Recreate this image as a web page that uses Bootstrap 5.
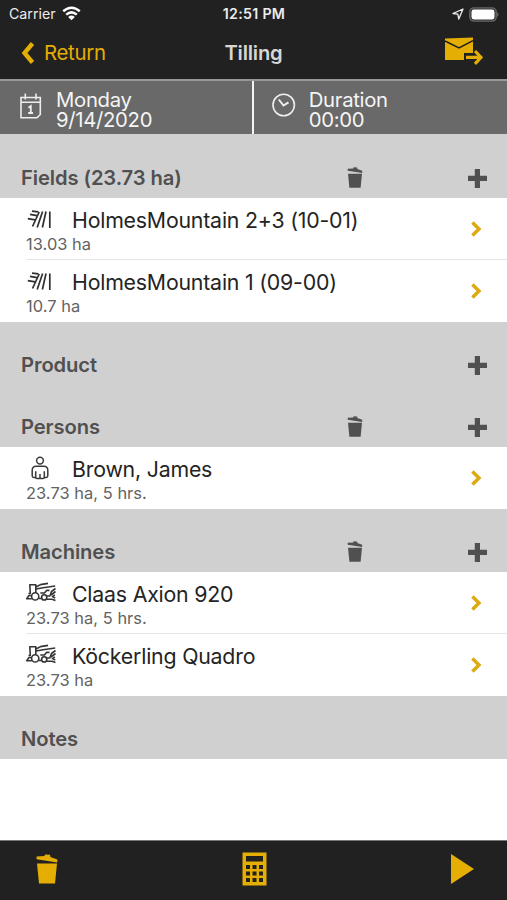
<!DOCTYPE html>
<html lang="en">
<head>
<meta charset="utf-8">
<meta name="viewport" content="width=device-width, initial-scale=1">
<title>Tilling</title>
<link href="https://cdn.jsdelivr.net/npm/bootstrap@5.3.0/dist/css/bootstrap.min.css" rel="stylesheet">
<style>
body{font-family:Inter,"Liberation Sans",sans-serif;background:#fff;color:#242424;overflow:hidden}
svg{display:block;flex:none}
.screen{height:900px}
.dark-bar{background:#212121}
.gold{color:#e5ae04}
.status{height:27px;font-size:14.2px;color:#ececec;padding:1px 8px 0 9px}
.status > div,.title-bar > div{flex:1 1 0}
.status .clock{letter-spacing:.3px}
.wifi{margin-left:6px}
.battery{margin-left:5px}
.title-bar{height:52px;padding:1px 24px 0 21px}
.back{font-size:20.4px;letter-spacing:-.3px}
.back span{margin-left:9px}
.page-name{font-size:20.2px;font-weight:600;color:#d6d6d6;letter-spacing:-.2px;padding-left:3px}
.mail{margin-top:-5px}
.info{height:55px;background:#696969;border-top:2px solid #999;color:#f5f5f5;font-size:20.3px;line-height:20px;letter-spacing:-.3px}
.info > div{padding:9px 0 0 20px;width:50%}
.info > div:first-child{border-right:2px solid #f4f4f4;width:254px}
.info .caption{padding-left:14px}
.section-head{height:62.4px;background:#d0d0d0;padding:23px 20px 0 21px;color:#505050;font-size:20.2px;font-weight:600;letter-spacing:-.1px}
.section-head.first{height:64px;padding-top:25px}
.section-head .heading{padding-top:6.4px}
.section-head .tools{width:140px}
.section-head .add{margin-top:10.4px}
.section-head .clear{margin-top:8.4px}
.entry{height:62.2px;padding:9.8px 25px 0 0;margin-left:26px}
.entry + .entry{border-top:1px solid #e6e6e6;padding-top:9.5px;margin-top:-.8px;height:63px}
.entry .name{font-size:21.3px;line-height:25px;letter-spacing:-.2px}
.entry .kind{width:46px}
.entry .detail{font-size:16.4px;line-height:22px;color:#626262;letter-spacing:.05px}
.entry .go{margin-top:13.5px}
.bottom-bar{height:60px;border-top:1px solid #777;padding:0 33px 3px 36px}
</style>
</head>
<body>
<svg width="0" height="0" class="position-absolute" aria-hidden="true">
<defs>
<symbol id="bin" viewBox="0 0 22 30"><path fill="currentColor" d="M1 9.6H21L19 29.5H3ZM.6 2.5 8.5 2 9 .5 14 .8 14.4 3 21.3 5.4V8.5L.6 5.2Z"/></symbol>
<symbol id="plus" viewBox="0 0 19 19"><path fill="currentColor" d="M6.8 0H12V6.8H19V12H12V19H6.8V12H0V6.8H6.8Z"/></symbol>
<symbol id="next" viewBox="0 0 11 16"><path fill="none" stroke="#deaa12" stroke-width="3.5" d="M1.4 1.4 8 8 1.4 14.6"/></symbol>
<symbol id="field" viewBox="0 0 26 20"><path fill="none" stroke="#303030" stroke-width="1.7" d="M5.5 16.5 12.2 2M10.2 17.5 15.6 1.5M15.4 17.5 19 1.5M22.8 1.5V18M5 1.2 11.5 1.8M3 4.4 10 5.6M.8 8.6 8.2 9.8"/></symbol>
<symbol id="person" viewBox="0 0 18 24"><g fill="none" stroke="#3a3a3a" stroke-width="1.5"><circle cx="9" cy="4.6" r="3.4"/><path d="M4.5 21.5H2.8Q1.2 21.5 1.2 19.8V14.2Q1.2 10.2 5.2 10.2H12.8Q16.8 10.2 16.8 14.2V19.8Q16.8 21.5 15.2 21.5H13.5M4.7 15.2V21.2Q4.7 22.4 6 22.4H12Q13.3 22.4 13.3 21.2V15.2M9 18V22.4"/></g></symbol>
<symbol id="machine" viewBox="0 0 31 20"><g fill="none" stroke="#353535" stroke-width="1.6" stroke-linejoin="round"><circle cx="9.2" cy="14.4" r="3.6"/><circle cx="18.2" cy="15.4" r="2.6"/><path d="M4.3 12 3.8 2.8H9.8V10.8M4 11.5H2.5M5.4 13.5H3L.7 16.8H5.8M12.8 16.5H15.4M10 5 14.5 2.6 22 1.4M10 7 17 5.8 29.2 4M14.3 11H18.5L20.5 8.4H23.5M20.6 14H23.8L25.5 9.5 29.5 6.5M20.8 17.2H26L29.5 18.5M25 13 29.5 9.5M28.8 12.8 26.5 14.6 29.2 16"/></g></symbol>
</defs>
</svg>
<main class="screen d-flex flex-column">
<header class="dark-bar">
<div class="status d-flex align-items-center">
<div class="d-flex align-items-center"><span>Carrier</span>
<svg class="wifi" width="19" height="15" viewBox="0 0 19 15"><g fill="none" stroke="#fff" stroke-width="2.5"><path d="M1.2 5.2Q9.5-1.8 17.8 5.2M4.2 8.6Q9.5 4.1 14.8 8.6"/></g><path fill="#fff" d="M6.2 10.9Q9.5 8.3 12.8 10.9L9.5 14.3Z"/></svg></div>
<div class="text-center fw-semibold clock text-nowrap">12:51 PM</div>
<div class="d-flex align-items-center justify-content-end">
<svg width="12" height="12" viewBox="0 0 12 12"><path fill="none" stroke="#eee" stroke-width="1.3" stroke-linejoin="round" d="M11 1 1 5.5 5.8 6.2 6.8 11Z"/></svg>
<svg class="battery" width="30" height="15" viewBox="0 0 30 15"><rect x=".8" y=".9" width="26.4" height="13.2" rx="4" fill="#333" stroke="#666" stroke-width="1.4"/><rect x="2.5" y="2.6" width="23" height="9.8" rx="2.3" fill="#fff"/><path d="M28.3 5Q30.5 7.5 28.3 10Z" fill="#777"/></svg></div>
</div>
<div class="title-bar d-flex align-items-center">
<div class="gold d-flex align-items-center back">
<svg width="14" height="22" viewBox="0 0 14 22"><path fill="none" stroke="currentColor" stroke-width="4.4" d="M11.5 1.5 3.5 11 11.5 20.5"/></svg><span>Return</span></div>
<div class="text-center page-name">Tilling</div>
<div class="d-flex justify-content-end">
<svg class="mail" width="39" height="28" viewBox="0 0 39 28"><path fill="#e5ae04" d="M1 1.5 29 .5V16H20V23H1Z"/><path fill="none" stroke="#212121" stroke-width="1.5" d="M1 4 15 11 29 3.6"/><path fill="none" stroke="#212121" stroke-width="7" d="M22 20.4H33"/><path fill="none" stroke="#e5ae04" stroke-width="3.2" d="M22 20.4H36M31 14 37 20.4 31 26.8"/></svg></div>
</div>
</header>
<section class="info d-flex">
<div class="d-flex"><svg style="margin-top:3px" width="22" height="28" viewBox="0 0 22 28"><g fill="none" stroke="#eee" stroke-width="1.6"><path d="M1 4.5H20.3V21.5L17 24.7H1ZM1 9.2H20.3M5.3 .5V6.5M16 .5V6.5"/></g><path fill="none" stroke="#eee" stroke-width="1.8" d="M8.5 14.7 10.8 13V20M8.2 20H13"/></svg><div class="caption">Monday<br>9/14/2020</div></div>
<div class="d-flex ps-0"><svg style="margin:3px 1px 0 18px" width="24" height="24" viewBox="0 0 24 24"><g fill="none" stroke="#eee" stroke-width="1.6"><circle cx="11.7" cy="12" r="10.7"/><path stroke-width="2" d="M6.8 6.5 11.5 12.5 16.5 9.3"/></g></svg><div class="caption" style="padding-left:12px">Duration<br>00:00</div></div>
</section>
<section>
<div class="section-head first d-flex justify-content-between align-items-start lh-sm"><span class="heading">Fields (23.73 ha)</span><span class="tools d-flex justify-content-between"><svg class="clear" width="16" height="21"><use href="#bin"/></svg><svg class="add" width="19" height="19"><use href="#plus"/></svg></span></div>
<div class="entry d-flex justify-content-between"><div><div class="name d-flex"><span class="kind"><svg style="margin:2px 0 0 1px" width="26" height="20"><use href="#field"/></svg></span><span>HolmesMountain 2+3 (10-01)</span></div><div class="detail">13.03 ha</div></div><svg class="go" width="11" height="16"><use href="#next"/></svg></div>
<div class="entry d-flex justify-content-between"><div><div class="name d-flex"><span class="kind"><svg style="margin:2px 0 0 1px" width="26" height="20"><use href="#field"/></svg></span><span>HolmesMountain 1 (09-00)</span></div><div class="detail">10.7 ha</div></div><svg class="go" width="11" height="16"><use href="#next"/></svg></div>
</section>
<section class="section-head d-flex justify-content-between align-items-start lh-sm"><span class="heading">Product</span><svg class="add" width="19" height="19"><use href="#plus"/></svg></section>
<section>
<div class="section-head d-flex justify-content-between align-items-start lh-sm"><span class="heading">Persons</span><span class="tools d-flex justify-content-between"><svg class="clear" width="16" height="21"><use href="#bin"/></svg><svg class="add" width="19" height="19"><use href="#plus"/></svg></span></div>
<div class="entry d-flex justify-content-between"><div><div class="name d-flex"><span class="kind"><svg style="margin-left:5px;margin-top:-1px" width="18" height="24"><use href="#person"/></svg></span><span>Brown, James</span></div><div class="detail">23.73 ha, 5 hrs.</div></div><svg class="go" width="11" height="16"><use href="#next"/></svg></div>
</section>
<section>
<div class="section-head d-flex justify-content-between align-items-start lh-sm"><span class="heading">Machines</span><span class="tools d-flex justify-content-between"><svg class="clear" width="16" height="21"><use href="#bin"/></svg><svg class="add" width="19" height="19"><use href="#plus"/></svg></span></div>
<div class="entry d-flex justify-content-between"><div><div class="name d-flex"><span class="kind"><svg width="31" height="20"><use href="#machine"/></svg></span><span>Claas Axion 920</span></div><div class="detail">23.73 ha, 5 hrs.</div></div><svg class="go" width="11" height="16"><use href="#next"/></svg></div>
<div class="entry d-flex justify-content-between"><div><div class="name d-flex"><span class="kind"><svg width="31" height="20"><use href="#machine"/></svg></span><span>Köckerling Quadro</span></div><div class="detail">23.73 ha</div></div><svg class="go" width="11" height="16"><use href="#next"/></svg></div>
</section>
<section class="section-head lh-sm"><div class="heading">Notes</div></section>
<footer class="bottom-bar dark-bar gold mt-auto d-flex align-items-center justify-content-between">
<svg width="22" height="30"><use href="#bin"/></svg>
<svg width="25" height="34" viewBox="0 0 25 34"><path fill="currentColor" fill-rule="evenodd" d="M.5.5H24.5V33.5H.5ZM4 4V9.5H21V4ZM4 13V17H8V13ZM10.5 13V17H14.5V13ZM17 13V17H21V13ZM4 19.5V23.5H8V19.5ZM10.5 19.5V23.5H14.5V19.5ZM17 19.5V23.5H21V19.5ZM4 26V30H8V26ZM10.5 26V30H14.5V26ZM17 26V30H21V26Z"/></svg>
<svg width="23" height="30" viewBox="0 0 23 30"><path fill="currentColor" d="M0 0 23 15 0 30Z"/></svg>
</footer>
</main>
<script src="https://cdn.jsdelivr.net/npm/bootstrap@5.3.0/dist/js/bootstrap.bundle.min.js"></script>
</body>
</html>
